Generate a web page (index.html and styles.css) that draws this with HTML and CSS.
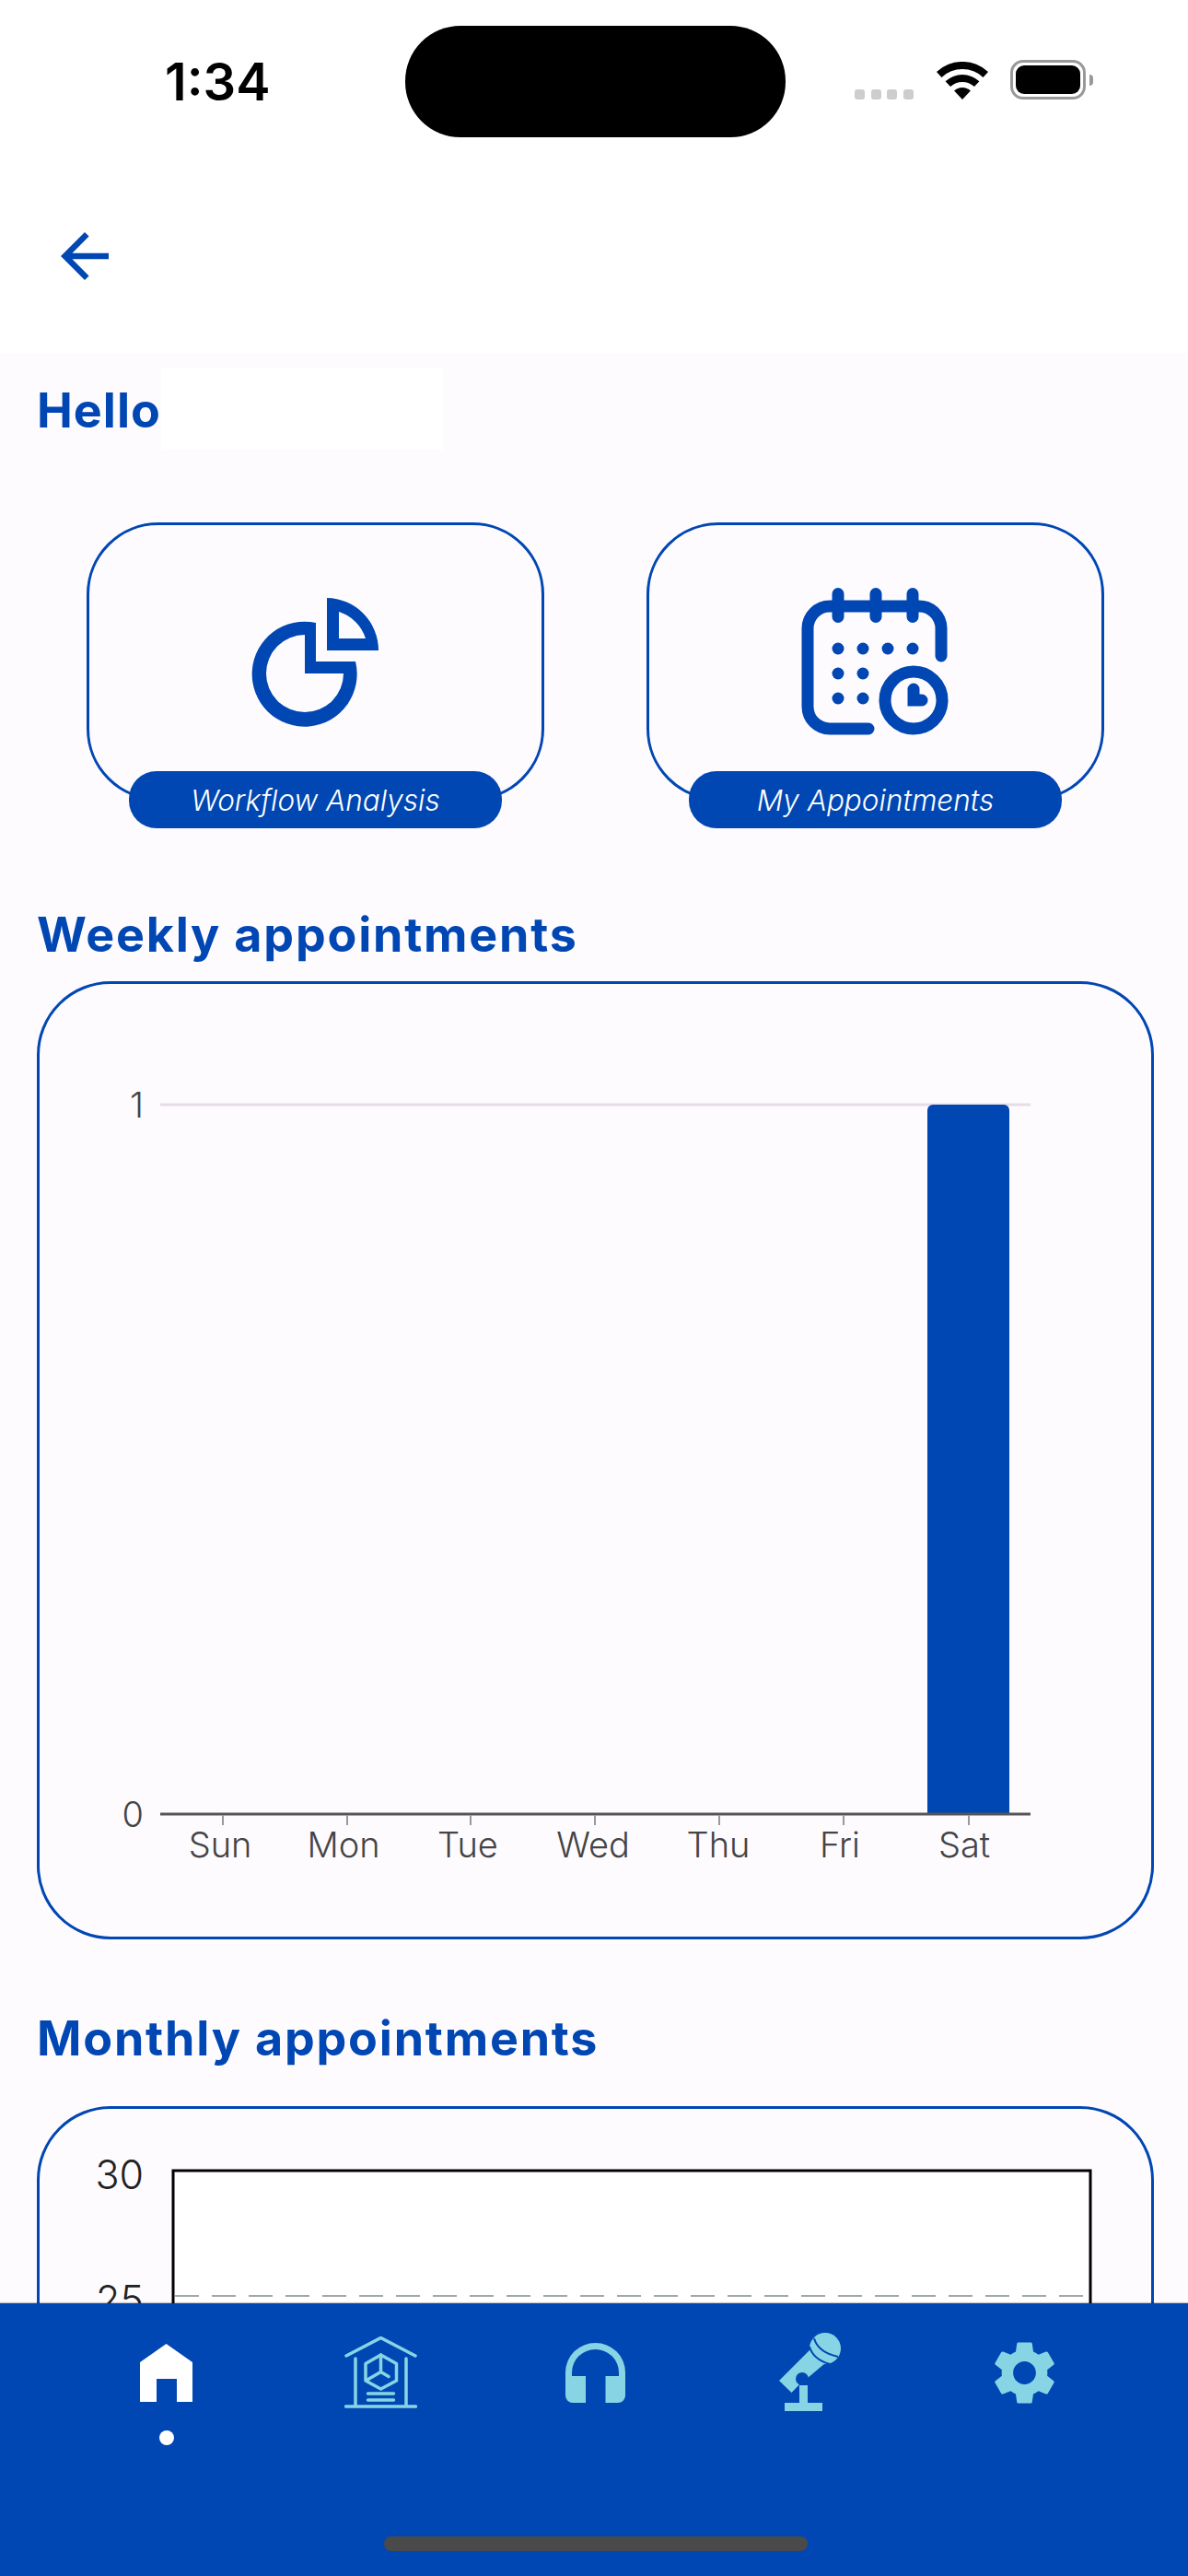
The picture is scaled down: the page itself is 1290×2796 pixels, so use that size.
FILE: index.html
```html
<!DOCTYPE html>
<html>
<head>
  <title>Home</title>
  <link rel="stylesheet" href="styles.css">
</head>
<body>
  <div class="screen">
    <div class="top-area">
      <div class="status-bar">
        <span class="clock">1:34</span>
        <div class="island"></div>
        <div class="status-icons">
          <div class="signal"><i></i><i></i><i></i><i></i></div>
          <svg class="wifi" width="56" height="41" viewBox="0 0 56 41">
            <path d="M0 11A41 41 0 0 1 56 11L50.5 16.9A33 33 0 0 0 5.5 16.9Z"/>
            <path d="M9.6 21.3A27 27 0 0 1 46.4 21.3L41 27.1A19 19 0 0 0 15 27.1Z"/>
            <path d="M19.1 31.5A13 13 0 0 1 36.9 31.5L28 41Z"/>
          </svg>
          <div class="battery"><div class="battery-level"></div></div>
          <div class="battery-nub"></div>
        </div>
      </div>
      <div class="app-bar">
        <svg class="back" width="52" height="52" viewBox="4 4 16 16">
          <path d="M20 11H7.83l5.59-5.59L12 4l-8 8 8 8 1.41-1.41L7.83 13H20v-2z"/>
        </svg>
      </div>
    </div>

    <main class="content">
      <div class="greeting">
        <h2 class="heading">Hello</h2>
        <div class="user-name"></div>
      </div>

      <div class="tiles">
        <div class="tile">
          <svg class="tile-icon" width="138" height="138" viewBox="0 0 138 138">
            <path fill-rule="evenodd" d="M69 27A57 57 0 1 0 112 69L69 69ZM57 40A42 42 0 1 0 99 82L57 82Z"/>
            <path fill-rule="evenodd" d="M81 0A57 57 0 0 1 137 57L81 57ZM94 15A44 44 0 0 1 123 44L94 44Z"/>
          </svg>
          <span class="tile-label">Workflow Analysis</span>
        </div>
        <div class="tile">
          <svg class="tile-icon calendar" width="160" height="160" viewBox="0 0 160 160">
            <g class="cal-lines">
              <path d="M152 74V44a24 24 0 0 0-24-24H31a24 24 0 0 0-24 24V129a24 24 0 0 0 24 24H73"/>
              <path d="M40 6.500V31.500M81 6.500V31.500M121 6.500V31.500"/>
              <circle cx="122" cy="122" r="31"/>
              <path d="M122 110V122H131"/>
            </g>
            <circle cx="40" cy="66" r="6.500"/><circle cx="67" cy="66" r="6.500"/><circle cx="94" cy="66" r="6.500"/><circle cx="121" cy="66" r="6.500"/>
            <circle cx="40" cy="93" r="6.500"/><circle cx="67" cy="93" r="6.500"/>
            <circle cx="40" cy="120" r="6.500"/><circle cx="67" cy="120" r="6.500"/>
          </svg>
          <span class="tile-label">My Appointments</span>
        </div>
      </div>

      <h2 class="heading weekly-title">Weekly appointments</h2>
      <div class="chart-card weekly-card">
        <svg width="1207" height="1034" viewBox="0 0 1207 1034">
          <line class="grid" x1="131" y1="131" x2="1076" y2="131"/>
          <path class="bar" d="M964 901V137a6 6 0 0 1 6-6H1047a6 6 0 0 1 6 6V901Z"/>
          <line class="axis" x1="131" y1="901" x2="1076" y2="901"/>
          <path class="ticks" d="M199 902v11M334 902v11M468 902v11M603 902v11M738 902v11M873 902v11M1009 902v11"/>
          <text class="axis-label" x="113" y="145" text-anchor="end">1</text>
          <text class="axis-label" x="113" y="915" text-anchor="end">0</text>
          <text class="axis-label" x="196" y="948" text-anchor="middle">Sun</text>
          <text class="axis-label" x="330" y="948" text-anchor="middle">Mon</text>
          <text class="axis-label" x="465" y="948" text-anchor="middle">Tue</text>
          <text class="axis-label" x="601" y="948" text-anchor="middle">Wed</text>
          <text class="axis-label" x="737" y="948" text-anchor="middle">Thu</text>
          <text class="axis-label" x="869" y="948" text-anchor="middle">Fri</text>
          <text class="axis-label" x="1004" y="948" text-anchor="middle">Sat</text>
        </svg>
      </div>

      <h2 class="heading monthly-title">Monthly appointments</h2>
      <div class="chart-card monthly-card">
        <svg width="1207" height="600" viewBox="0 0 1207 600">
          <rect class="plot" x="145" y="67" width="996" height="560"/>
          <line class="dash" x1="147" y1="203" x2="1139" y2="203"/>
          <text class="month-label" x="113" y="87" text-anchor="end">30</text>
          <text class="month-label" x="113" y="223" text-anchor="end">25</text>
        </svg>
      </div>
    </main>

    <nav class="tab-bar">
      <div class="tabs">
        <svg class="tab-active" width="57" height="63" viewBox="0 0 57 63">
          <path d="M0 20L28.500 0L57 20V63H40V38H18V63H0Z"/>
        </svg>
        <svg class="tab-lines" width="79" height="79" viewBox="0 0 79 79">
          <path d="M2 21L39.500 1.500L77 21M12 24V76M67 24V76M1.500 76H77.500"/>
          <path d="M39.500 20L56.500 29.500V48L39.500 57L23 48V29.500Z"/>
          <path d="M39.500 20V38.500L24 47.500M39.500 38.500L48 43.500"/>
          <path d="M25.500 62H53.500M25.500 69H53.500"/>
        </svg>
        <svg class="tab-icon" width="65" height="65" viewBox="0 0 65 65">
          <path d="M0 32A32.500 32 0 0 1 65 32V57a8 8 0 0 1-8 8H43.500V36H58V32A25.500 25 0 0 0 7 32V36H22V65H8a8 8 0 0 1-8-8Z"/>
        </svg>
        <svg class="tab-icon" width="67" height="86" viewBox="0 0 67 86">
          <circle cx="50" cy="17" r="17"/>
          <path d="M34 18L0 52L13.500 65L25 53L31 49L50 33Z"/>
          <circle class="cut" cx="25" cy="50" r="7"/>
          <path d="M22 57H31V76H47V85H6V76H22Z"/>
          <path class="cut-line" d="M38 6Q42 21 64 26M33 15Q37 29 55 34"/>
        </svg>
        <svg class="tab-icon" width="67" height="69" viewBox="2.600 2 18.800 20">
          <path d="M19.140 12.940c.04-.3.06-.61.06-.94 0-.32-.02-.64-.07-.94l2.030-1.580c.18-.14.23-.41.12-.61l-1.920-3.320c-.12-.22-.37-.29-.59-.22l-2.390.96c-.5-.38-1.030-.7-1.620-.94l-.36-2.540c-.04-.24-.24-.41-.48-.41h-3.840c-.24 0-.43.17-.47.41l-.36 2.540c-.59.24-1.130.57-1.620.94l-2.390-.96c-.22-.08-.47 0-.59.22L2.740 8.870c-.12.21-.08.47.12.61l2.030 1.580c-.05.3-.09.63-.09.94s.02.64.07.94l-2.030 1.580c-.18.14-.23.41-.12.61l1.920 3.320c.12.22.37.29.59.22l2.390-.96c.5.38 1.030.7 1.620.94l.36 2.540c.05.24.24.41.48.41h3.840c.24 0 .44-.17.47-.41l.36-2.540c.59-.24 1.130-.56 1.620-.94l2.390.96c.22.08.47 0 .59-.22l1.920-3.320c.12-.22.07-.47-.12-.61l-2.010-1.580zM12 15.600c-1.980 0-3.600-1.620-3.600-3.600s1.620-3.600 3.600-3.600 3.600 1.620 3.600 3.600-1.620 3.600-3.600 3.600z"/>
        </svg>
        <div class="tab-dot"></div>
      </div>
      <div class="home-indicator"></div>
    </nav>
  </div>
</body>
</html>
```

FILE: styles.css
```css
body {
  margin: 0;
  font-family: Inter, "Liberation Sans", sans-serif;
}

.screen {
  width: 1290px;
  height: 2796px;
  display: flex;
  flex-direction: column;
  overflow: hidden;
  background-color: #fefbff;
}

/* status bar + back arrow */
.top-area {
  height: 383px;
  background-color: white;
}

.status-bar {
  display: flex;
  align-items: flex-start;
  padding: 28px 0 0 179px;
}

.clock {
  width: 261px;
  margin-top: 27px;
  font-size: 56px;
  line-height: 68px;
  font-weight: 600;
  color: black;
}

.island {
  width: 413px;
  height: 121px;
  border-radius: 60px;
  background-color: black;
}

.status-icons {
  display: flex;
  align-items: flex-end;
  margin: 37px 0 0 75px;
  height: 43px;
}

.signal {
  display: flex;
  gap: 6.500px;
  margin-right: 25px;
}

.signal i {
  width: 11px;
  height: 11px;
  border-radius: 3px;
  background-color: #cdcdcd;
}

.wifi {
  margin-right: 24px;
}

.battery {
  box-sizing: border-box;
  width: 82px;
  height: 43px;
  padding: 3px;
  border: 3px solid #999;
  border-radius: 14px;
}

.battery-level {
  height: 100%;
  border-radius: 9px;
  background-color: black;
}

.battery-nub {
  width: 4px;
  height: 12px;
  margin: 0 0 15px 4px;
  border-radius: 0 6px 6px 0;
  background-color: #999;
}

.app-bar {
  padding: 103px 0 0 66px;
}

.back {
  display: block;
  fill: #0047b3;
}

/* scrolling part */
.content {
  flex: 1;
  min-height: 0;
  overflow: hidden;
  padding-left: 40px;
}

.heading {
  margin: 0;
  font-size: 52px;
  line-height: 60px;
  font-weight: 650;
  letter-spacing: 1.800px;
  color: #0047b3;
}

.greeting {
  display: flex;
  align-items: center;
  height: 88px;
  margin-top: 17px;
}

.greeting .heading {
  width: 135px;
  margin-top: 4px;
  letter-spacing: 1px;
}

.user-name {
  width: 306px;
  height: 100%;
  background-color: white;
}

.tiles {
  display: flex;
  gap: 111px;
  margin: 79px 0 0 54px;
}

.tile {
  box-sizing: border-box;
  position: relative;
  display: flex;
  justify-content: center;
  width: 497px;
  height: 302px;
  border: 3px solid #0047b3;
  border-radius: 78px;
}

.tile-icon {
  fill: #0047b3;
  margin-top: 79px;
  overflow: visible;
}

.tile-icon.calendar {
  margin: 68px 2px 0 0;
}

.cal-lines {
  fill: none;
  stroke: #0047b3;
  stroke-width: 13;
  stroke-linecap: round;
}

.tile-label {
  position: absolute;
  left: 43px;
  bottom: -33px;
  width: 405px;
  height: 62px;
  border-radius: 30px;
  background-color: #0047b3;
  color: white;
  font-size: 31.500px;
  font-weight: 300;
  font-style: italic;
  line-height: 64px;
  text-align: center;
}

.weekly-title {
  margin-top: 116px;
}

.monthly-title {
  margin-top: 78px;
}

.chart-card {
  width: 1207px;
  border: 3px solid #0047b3;
  border-radius: 80px;
}

.chart-card svg {
  display: block;
}

.weekly-card {
  height: 1034px;
  margin-top: 20px;
}

.monthly-card {
  height: 600px;
  margin-top: 43px;
}

.grid {
  stroke: #e4dde6;
  stroke-width: 3;
}

.bar {
  fill: #0047b3;
}

.axis {
  stroke: #555;
  stroke-width: 3;
}

.ticks {
  stroke: #999;
  stroke-width: 2;
}

.axis-label {
  font-size: 38px;
  font-weight: 350;
  fill: #444;
}

.plot {
  fill: white;
  stroke: black;
  stroke-width: 3;
}

.dash {
  stroke: #a0a8ac;
  stroke-width: 2;
  stroke-dasharray: 26 14;
}

.month-label {
  font-size: 43px;
  font-weight: 350;
  fill: #222;
}

/* bottom tabs */
.tab-bar {
  display: flex;
  flex-direction: column;
  flex: none;
  box-sizing: border-box;
  height: 296px;
  padding: 30px 0 27px 64px;
  background-color: #0047b3;
  box-shadow: 0 -1px 1px rgba(0, 0, 0, 0.2);
}

.tabs {
  display: grid;
  grid-template-columns: repeat(5, 233px);
  grid-template-rows: 90px auto;
  justify-items: center;
  align-items: center;
}

.tab-active {
  fill: white;
}

.tab-icon {
  fill: #87d5e4;
}

.tab-lines {
  fill: none;
  stroke: #87d5e4;
  stroke-width: 3.500;
  stroke-linecap: round;
  stroke-linejoin: round;
}

.tab-icon .cut {
  fill: #0047b3;
}

.tab-icon .cut-line {
  fill: none;
  stroke: #0047b3;
  stroke-width: 2;
}

.tab-dot {
  grid-column: 1;
  width: 16px;
  height: 16px;
  margin-top: 18px;
  border-radius: 50%;
  background-color: white;
}

.home-indicator {
  width: 460px;
  height: 16px;
  margin: auto 0 0 353px;
  border-radius: 8px;
  background-color: #4a4a4a;
}
```
